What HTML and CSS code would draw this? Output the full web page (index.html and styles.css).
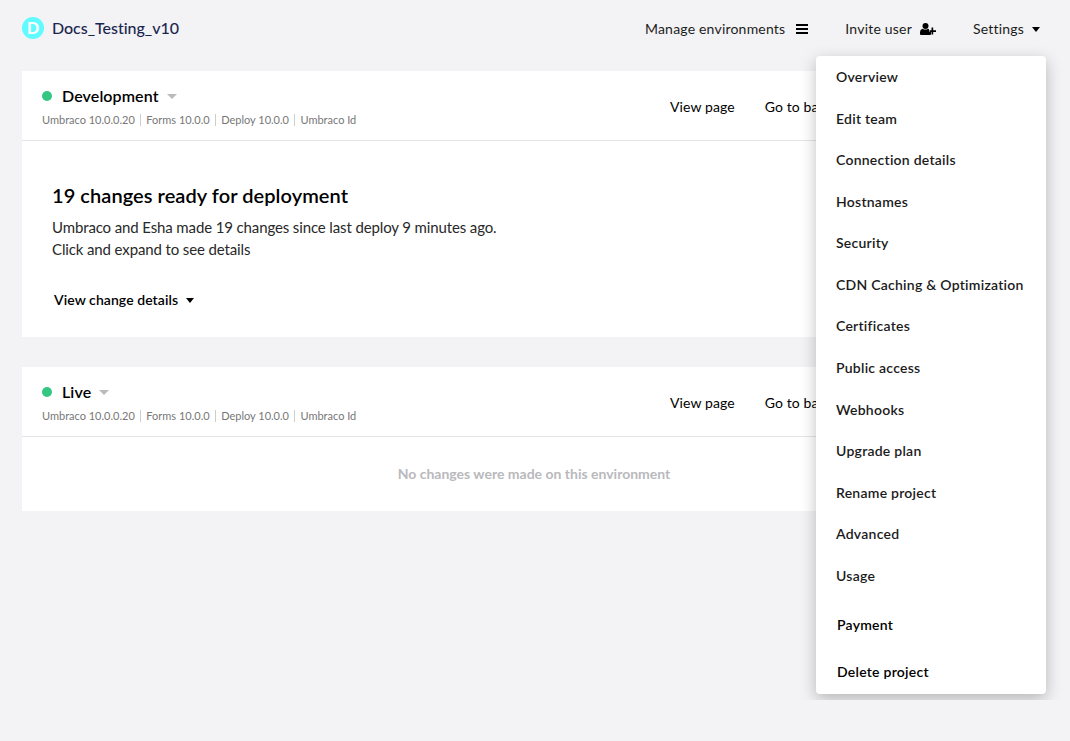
FILE: index.html
```html
<!DOCTYPE html>
<html lang="en">
<head>
<meta charset="utf-8">
<title>Docs_Testing_v10</title>
<link rel="stylesheet" href="styles.css">
</head>
<body>
<header class="topbar">
  <div class="brand"><span class="avatar">D</span><span class="brand-name">Docs_Testing_v10</span></div>
  <nav class="actions">
    <a class="action manage">Manage environments <svg class="bars" width="12" height="10" viewBox="0 0 12 10"><path d="M0 1h12M0 5h12M0 9h12" stroke="#000" stroke-width="2"/></svg></a>
    <a class="action invite">Invite user <svg class="user" width="16" height="12" viewBox="0 0 16 12"><circle cx="5.500" cy="3" r="3"/><path d="M0 11V9Q0 6.500 2.500 5.700Q5.500 7.500 8 5.700L9 6.200V9H11V11.500L10 12H1Q0 12 0 11ZM11.500 4.500h1.700v2.700H16v1.700h-2.800v2.600h-1.700V8.900H9.500V7.200h2Z"/></svg></a>
    <a class="action">Settings <span class="caret"></span></a>
  </nav>
</header>
<main class="environments">
  <section class="card">
    <div class="card-head">
      <div>
        <h2 class="env-name"><span class="dot"></span>Development<span class="caret muted"></span></h2>
        <ul class="versions"><li>Umbraco 10.0.0.20</li><li>Forms 10.0.0</li><li>Deploy 10.0.0</li><li>Umbraco Id</li></ul>
      </div>
      <div class="links"><a>View page</a><a>Go to ba</a></div>
    </div>
    <div class="changes">
      <h3 class="changes-title">19 changes ready for deployment</h3>
      <p class="changes-text">Umbraco and Esha made 19 changes since last deploy 9 minutes ago.<br>Click and expand to see details</p>
      <a class="details">View change details <span class="caret"></span></a>
    </div>
  </section>
  <section class="card">
    <div class="card-head">
      <div>
        <h2 class="env-name"><span class="dot"></span>Live<span class="caret muted"></span></h2>
        <ul class="versions"><li>Umbraco 10.0.0.20</li><li>Forms 10.0.0</li><li>Deploy 10.0.0</li><li>Umbraco Id</li></ul>
      </div>
      <div class="links"><a>View page</a><a>Go to ba</a></div>
    </div>
    <p class="empty">No changes were made on this environment</p>
  </section>
</main>
<ul class="menu">
  <li>Overview</li><li>Edit team</li><li>Connection details</li><li>Hostnames</li><li>Security</li><li>CDN Caching &amp; Optimization</li><li>Certificates</li><li>Public access</li><li>Webhooks</li><li>Upgrade plan</li><li>Rename project</li><li>Advanced</li><li>Usage</li><li class="payment">Payment</li><li class="delete">Delete project</li>
</ul>
</body>
</html>
```
FILE: styles.css
```css
* { box-sizing: border-box; }
body { margin: 0; height: 741px; overflow: hidden; background: #f3f3f5; color: #000; font: 15px/22px Lato, sans-serif; }
h2, h3, p, ul { margin: 0; padding: 0; }
ul { list-style: none; }
.topbar { height: 71px; padding: 17px 30px 0 22px; display: flex; justify-content: space-between; }
.brand { display: flex; gap: 8px; height: 22px; align-items: center; }
.avatar { width: 22px; height: 22px; border-radius: 50%; background: #5ffbff; color: #fff; font-weight: 900; font-size: 16px; text-align: center; }
.brand-name { color: #1b264f; font-size: 16px; font-weight: 500; letter-spacing: -.02px; }
.actions { display: flex; padding-top: 1px; }
.action { display: flex; align-items: center; height: 22px; font-size: 14px; font-weight: 400; letter-spacing: .2px; color: #1c1c1c; white-space: nowrap; }
.manage { margin-right: 37px; }
.bars { margin-left: 11px; }
.invite { margin-right: 37px; }
.user { margin-left: 8px; fill: #000; }
.caret { display: inline-block; border: 4.500px solid transparent; border-top: 5px solid #000; border-bottom: 0; margin-left: 8px; }
.muted { border-left-width: 5px; border-right-width: 5px; border-top-color: #bbb; }
.environments { padding: 0 0 0 22px; display: grid; gap: 30px; }
.card { background: #fff; width: 1024px; }
.card-head { height: 70px; border-bottom: 1px solid #e5e5e7; padding: 14px 20px 0; display: flex; }
.card-head > div:first-child { width: 628px; }
.env-name { font-size: 16px; line-height: 22px; font-weight: 600; letter-spacing: .1px; display: flex; align-items: center; }
.dot { width: 10px; height: 10px; border-radius: 50%; background: #34c683; margin-right: 10px; }
.versions { display: flex; font-size: 11px; line-height: 12px; color: #777; margin-top: 7px; }
.versions li + li { border-left: 1px solid #ccc; margin-left: 5px; padding-left: 5.500px; }
.links { display: flex; gap: 30px; padding-top: 11px; font-size: 14px; letter-spacing: .1px; white-space: nowrap; }
.changes { height: 196px; padding: 41px 30px 0; }
.changes-title { font-size: 20px; line-height: 26px; font-weight: 600; letter-spacing: .06px; }
.changes-text { margin-top: 8px; color: #292929; letter-spacing: -.125px; }
.details { display: flex; align-items: center; margin: 29px 0 0 2px; font-size: 14px; font-weight: 600; letter-spacing: .07px; }
.empty { height: 74px; padding-top: 26px; text-align: center; font-size: 14px; font-weight: 700; color: #b9b9bd; }
.menu { position: absolute; left: 816px; top: 56px; width: 230px; height: 638px; background: #fff; border-radius: 4px; box-shadow: 0 5px 16px rgba(0,0,0,.25); clip-path: inset(-20px -18px -6px -16px); padding: 0 20px; font-size: 14px; font-weight: 600; letter-spacing: .25px; color: #1b1b1b; white-space: nowrap; }
.menu li { height: 41.580px; line-height: 41.300px; }
.menu .payment { margin-top: 7px; height: 47px; }
.menu .payment, .menu .delete { padding-left: 1px; color: #000; }
```
